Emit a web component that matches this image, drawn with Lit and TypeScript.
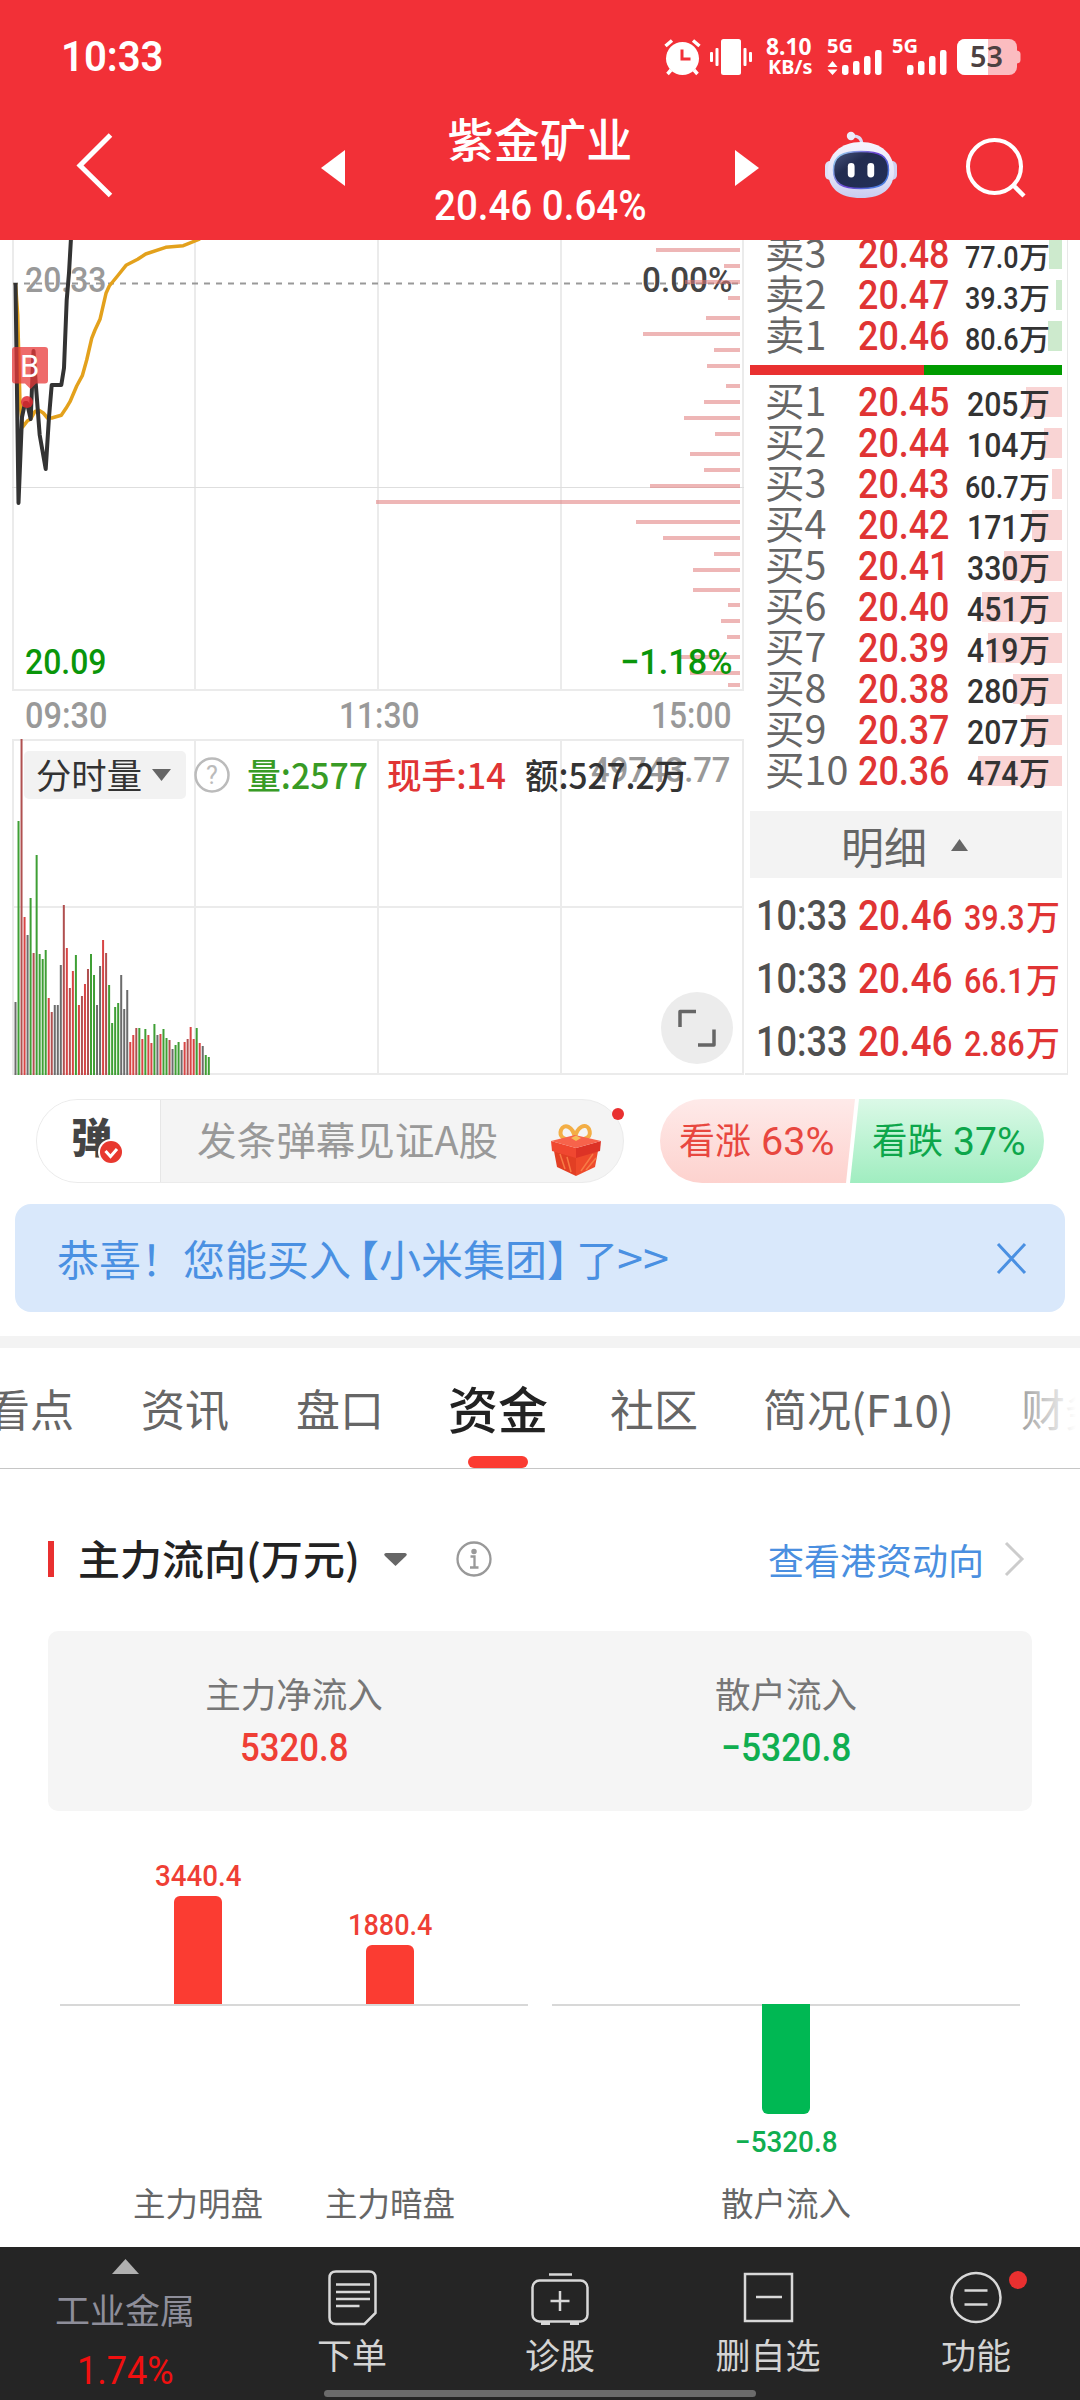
import { LitElement, html, svg, css } from "lit";
import { customElement } from "lit/decorators.js";

/* Numerals: an SVG whose box is exactly the cap-height box of the text. */
const num = (text: string, width: number, cap: number, cls = "") => html`
  <svg class="num ${cls}" width=${width} height=${cap}>
    <text x="-1" y=${cap} font-size=${cap / 0.711} textLength=${width + 2.5} lengthAdjust="spacingAndGlyphs">${text}</text>
  </svg>`;

/* Mixed Chinese / numeral text stretched to an exact width; the box is the em box. */
const mixed = (text: string, width: number, size: number, cls = "") => html`
  <svg class="mixed ${cls}" width=${width} height=${size}>
    <text x="-1" y=${size * 0.88} font-size=${size} textLength=${width + 2} lengthAdjust="spacingAndGlyphs">${text}</text>
  </svg>`;

const chartNum = (text: string, x: number, y: number, width: number, cls: string) => svg`
  <text class="cn ${cls}" x=${x - 1} y=${y} font-size="35.5" textLength=${width + 1.5} lengthAdjust="spacingAndGlyphs">${text}</text>`;

const PRICE_LEVELS: [number, number][] = [
  [656, 250], [724, 266], [685, 282], [728, 298], [706, 318], [643, 334], [714, 350], [707, 366], [726, 386],
  [704, 402], [684, 418], [715, 434], [690, 454], [704, 470], [650, 486], [376, 502], [636, 522], [663, 538],
  [714, 554], [693, 570], [693, 590], [728, 605], [721, 621], [727, 637], [680, 657], [690, 673], [728, 685],
];

/* Volume bars: colour key and height in px. */
const VOLUME =
  "k73 g254 d336 r158 k140 g177 d122 g220 g121 g116 g125 r77 d63 k70 k70 k110 d170 r127 d87 r104 g120 r70 d79 r91 d106 g121 g100 k70 k109 r135 d122 g90 g52 g68 g72 k100 k66 k85 r33 r40 d47 g47 r36 g46 r40 r32 g51 k40 r41 g46 g37 d35 k26 g30 g33 k25 r33 d36 r48 r36 g47 r32 k29 g20 g18".split(" ");
const VOL_COLORS: Record<string, string> = { k: "#6c6c6c", g: "#3f9f35", r: "#d84545", d: "#b05050" };

interface Level { label: string; price: string; vol: string; bar: number; }
const ASKS: Level[] = [
  { label: "卖3", price: "20.48", vol: "77.0", bar: 13 },
  { label: "卖2", price: "20.47", vol: "39.3", bar: 6 },
  { label: "卖1", price: "20.46", vol: "80.6", bar: 14 },
];
const BIDS: Level[] = [
  { label: "买1", price: "20.45", vol: "205", bar: 36 },
  { label: "买2", price: "20.44", vol: "104", bar: 18 },
  { label: "买3", price: "20.43", vol: "60.7", bar: 10 },
  { label: "买4", price: "20.42", vol: "171", bar: 30 },
  { label: "买5", price: "20.41", vol: "330", bar: 58 },
  { label: "买6", price: "20.40", vol: "451", bar: 80 },
  { label: "买7", price: "20.39", vol: "419", bar: 74 },
  { label: "买8", price: "20.38", vol: "280", bar: 49 },
  { label: "买9", price: "20.37", vol: "207", bar: 36 },
  { label: "买10", price: "20.36", vol: "474", bar: 84 },
];
const TRADES = ["39.3", "66.1", "2.86"];

const base = css`
  * { box-sizing: border-box; }
  svg { display: block; flex: none; overflow: visible; }
  .num text, .cn { font-family: Roboto, "Liberation Sans", sans-serif; font-weight: 500; }
  .num text, .mixed text { fill: currentColor; }
  .num.regular text { font-weight: 400; }
  .mixed text { font-family: "Noto Sans CJK SC", sans-serif; font-weight: 400; }
  .mixed.medium text { font-weight: 500; }
`;

@customElement("top-header")
class TopHeader extends LitElement {
  static styles = [base, css`
    :host { display: block; height: 240px; background: #f23037; color: #fff; }
    .status { display: flex; height: 90px; padding: 39px 60px 0 62px; align-items: flex-start; }
    .time { margin-top: 2px; }
    .num.clock text { font-weight: 600; }
    .icons { display: flex; margin-left: auto; }
    .vib { margin-left: 9px; }
    .speed { display: flex; flex-direction: column; gap: 5px; margin-left: 15px; }
    .speed .unit { margin-left: 2px; }
    .speed text, .g5 { font-family: "Noto Sans", sans-serif; font-weight: 700; }
    .pct { font-family: "Noto Sans", sans-serif; font-weight: 600; }
    .sig { margin-left: 17px; }
    .sig2 { margin-left: 11px; }
    .bat { margin-left: 10px; }
    .nav { display: flex; align-items: center; height: 150px; padding-left: 76px; }
    .prev { margin-left: 209px; margin-top: 6px; }
    .next { margin-top: 6px; }
    .title { width: 390px; display: flex; flex-direction: column; align-items: center; margin-top: 4px; gap: 30px; }
    .name { font: 500 46px/46px "Noto Sans CJK SC", sans-serif; letter-spacing: 0.3px; }
    .robot { margin-left: 66px; }
    .search { margin-left: 69px; margin-top: 3px; }
  `];
  render() {
    const bars = (x: number) => [0, 1, 2, 3].map((i) => {
      const h = [10, 14, 19, 25][i];
      return svg`<rect x=${x + i * 11} y=${36 - h} width="6.5" height=${h} rx="2.4" fill="#fff"/>`;
    });
    return html`
      <div class="status">
        <div class="time">${num("10:33", 100, 30, "clock")}</div>
        <div class="icons">
          <svg width="37" height="36" viewBox="0 0 37 36">
            <circle cx="18.500" cy="19.500" r="16.500" fill="#fff"/>
            <path d="M1.500 7L8 1.500M35.500 7L29 1.500M7 31L3.500 35M30 31L33.500 35" stroke="#fff" stroke-width="3.500" fill="none"/>
            <path d="M18 10.500V20H26.500" stroke="#f23037" stroke-width="3" fill="none"/>
          </svg>
          <svg class="vib" width="42" height="36" viewBox="0 0 42 36" fill="#fff">
            <rect x="11" width="20" height="36" rx="2.500"/><rect x="0" y="13" width="3" height="10" rx="1"/>
            <rect x="5.500" y="9" width="3" height="18" rx="1"/><rect x="33.500" y="9" width="3" height="18" rx="1"/>
            <rect x="39" y="13" width="3" height="10" rx="1"/>
          </svg>
          <div class="speed">${num("8.10", 43, 16)}<div class="unit">${num("KB/s", 42, 14)}</div></div>
          <svg class="sig" width="54" height="36">
            <text class="g5" x="-1" y="14" font-size="19" textLength="26" lengthAdjust="spacingAndGlyphs" fill="#fff">5G</text>
            <path d="M4.500 22L9.500 28H-.5ZM4.500 36L9.500 30.500H-.5Z" fill="#fff"/>${bars(14)}
          </svg>
          <svg class="sig2" width="54" height="36">
            <text class="g5" x="-1" y="14" font-size="19" textLength="26" lengthAdjust="spacingAndGlyphs" fill="#fff">5G</text>${bars(14)}
          </svg>
          <svg class="bat" width="63" height="36">
            <rect width="60" height="36" rx="8" fill="#fbbcc0"/>
            <path d="M8 0H31V36H8A8 8 0 0 1 0 28V8A8 8 0 0 1 8 0Z" fill="#fff"/>
            <path d="M60 11.500Q63.500 12 63.500 15V21Q63.500 24 60 24.500Z" fill="#fbbcc0"/>
            <text class="pct" x="13" y="28" font-size="28" textLength="33" lengthAdjust="spacingAndGlyphs" fill="#4c4142">53</text>
          </svg>
        </div>
      </div>
      <div class="nav">
        <svg width="36" height="64" viewBox="0 0 36 64"><path d="M34.500 2L4 32.500L34.500 62.500" fill="none" stroke="#fff" stroke-width="5"/></svg>
        <svg class="prev" width="24" height="36"><path d="M24 0V36L0 18Z" fill="#fff"/></svg>
        <div class="title"><div class="name">紫金矿业</div>${num("20.46 0.64%", 210, 30)}</div>
        <svg class="next" width="24" height="36"><path d="M0 0V36L24 18Z" fill="#fff"/></svg>
        <svg class="robot" width="72" height="66" viewBox="0 0 72 66">
          <defs>
            <linearGradient id="head" x1="0" y1="0" x2="0" y2="1"><stop offset="0" stop-color="#f6f5fd"/><stop offset=".6" stop-color="#e4e4f8"/><stop offset="1" stop-color="#c8ccf0"/></linearGradient>
            <linearGradient id="visor" x1="0" y1="0" x2="1" y2="1"><stop offset="0" stop-color="#4a5680"/><stop offset=".35" stop-color="#222c50"/><stop offset="1" stop-color="#223058"/></linearGradient>
            <linearGradient id="rim" x1="0" y1="0" x2="1" y2=".6"><stop offset="0" stop-color="#9be6f5"/><stop offset=".6" stop-color="#6a3fd0"/><stop offset="1" stop-color="#4a7be0"/></linearGradient>
          </defs>
          <path d="M27 4Q36 3 37 12" fill="none" stroke="#dcdcf5" stroke-width="3"/>
          <circle cx="26" cy="4" r="4.200" fill="#eeedfb"/>
          <rect x="0" y="29" width="10" height="19" rx="5" fill="#dfe0f6"/><rect x="62" y="29" width="10" height="19" rx="5" fill="#cfd1f0"/>
          <path d="M36 10C56 10 69 22 69 39C69 56 58 66 36 66C14 66 3 56 3 39C3 22 16 10 36 10Z" fill="url(#head)"/>
          <path d="M36 19.500C55 19.500 63.500 24 63.500 38C63.500 52 55 56.500 36 56.500C17 56.500 8.500 52 8.500 38C8.500 24 17 19.500 36 19.500Z" fill="url(#visor)" stroke="url(#rim)" stroke-width="1.500"/>
          <rect x="22.800" y="31" width="6.800" height="14.500" rx="3.400" fill="#fff"/><rect x="42.400" y="31" width="6.800" height="14.500" rx="3.400" fill="#fff"/>
        </svg>
        <svg class="search" width="60" height="60" viewBox="0 0 60 60" fill="none" stroke="#fff">
          <circle cx="28.500" cy="29.500" r="26.500" stroke-width="4"/><path d="M47.500 48.500L58 59" stroke-width="4.500"/>
        </svg>
      </div>`;
  }
}

@customElement("price-charts")
class PriceCharts extends LitElement {
  static styles = [base, css`
    :host { display: block; width: 745px; height: 835px; overflow: hidden; }
    .grey { fill: #999; color: #999; }
    .dark { fill: #444; }
    .green { fill: #0a960a; }
    .flag { font: 400 31px Roboto, sans-serif; fill: #fff; }
    .axis { display: flex; gap: 234px; padding: 10px 0 0 26px; height: 47px; color: #999; }
    .volume { position: relative; height: 336px; }
    .bar { position: absolute; left: 24px; top: 12px; display: flex; align-items: center; height: 48px; }
    .pill { display: flex; align-items: center; width: 162px; height: 48px; padding-left: 13px; gap: 11px; background: #f2f2f2; border-radius: 5px; color: #333; }
    .q { margin-left: 8px; }
    .v { margin-left: 18px; color: #389b25; }
    .h { margin-left: 21px; color: #e03434; }
    .m { margin-left: 21px; color: #333; }
    .full { position: absolute; left: 661px; top: 253px; }
    .qm { font: 400 25px Roboto, sans-serif; fill: #bbb; }
  `];
  render() {
    return html`
      <svg width="745" height="452" viewBox="0 240 745 452">
        <path d="M13 240V691M195 240V691M378 240V691M561 240V691M743 240V691M12 690H744" stroke="#ebebeb" stroke-width="2"/>
        <path d="M12 487.500H744" stroke="#dedede" stroke-width="1"/>
        <path d="M13 283.500H738" stroke="#999" stroke-width="2" stroke-dasharray="6 6" stroke-dashoffset="1"/>
        ${chartNum("20.33", 26, 292, 80, "grey")}
        ${chartNum("0.00%", 643, 292, 89, "dark")}
        ${PRICE_LEVELS.map(([x, y]) => svg`<rect x=${x} y=${y - 2} width=${740 - x} height="4" fill="#e07a7a" fill-opacity=".55"/>`)}
        <path d="M15.500 283L17.700 315L20 403L22.700 427L27.300 421L30.700 419L35 411.500L39.300 410.500L43.300 413L47.500 418H51.700L56 416.700L61.300 415.300L66 408.300L70 401.700L76.700 386L82.300 375.700L86.700 360L91.700 338.300L95 330L100 319.300L106 293.300L109.300 286L118.300 275L126 265.300L137.700 259.300L145.700 254L165.700 247.300L183.300 245.700L200 239" fill="none" stroke="#e3a11c" stroke-width="3.500" stroke-linejoin="round"/>
        <path d="M15.500 283L18.500 503L22 417L25 403H27L30.700 419L33.500 351L36 387L39.700 435L45.700 469L49 417L51.700 385H61.300L64 368L66.700 300L69 273L71 238" fill="none" stroke="#333" stroke-width="4" stroke-linejoin="round"/>
        <circle cx="27" cy="402" r="6" fill="#e02a30" fill-opacity=".85"/>
        <path d="M15 347H45Q48 347 48 350V380.500Q48 383.500 45 383.500H36L30.500 389L25 383.500H15Q12 383.500 12 380.500V350Q12 347 15 347Z" fill="#e83a3a" fill-opacity=".75"/>
        <text class="flag" x="20" y="376.500">B</text>
        ${chartNum("20.09", 26, 673.5, 80, "green")}
        ${chartNum("−1.18%", 621, 673.5, 111, "green")}
      </svg>
      <div class="axis">${num("09:30", 80, 26)}${num("11:30", 78, 26)}${num("15:00", 78, 26)}</div>
      <div class="volume">
        <svg width="745" height="336" viewBox="0 739 745 336">
          <path d="M12 740H744M12 907H744M12 1074H744M13 740V1075M195 740V1075M378 740V1075M561 740V1075M743 740V1075" stroke="#ebebeb" stroke-width="2"/>
          ${VOLUME.map((b, i) => {
            const h = Number(b.slice(1));
            return svg`<rect x=${14.5 + i * 3.02} y=${1075 - h} width="2" height=${h} fill=${VOL_COLORS[b[0]]}/>`;
          })}
          ${chartNum("49743.77", 592, 782, 138, "grey")}
        </svg>
        <div class="bar">
          <div class="pill">${mixed("分时量", 104, 35)}
            <svg width="19" height="12"><path d="M0 0H19L9.500 12Z" fill="#666"/></svg></div>
          <svg class="q" width="36" height="36"><circle cx="18" cy="18" r="16.500" fill="none" stroke="#bbb" stroke-width="2.500"/><text class="qm" x="18" y="27" text-anchor="middle">?</text></svg>
          ${mixed("量:2577", 119, 35, "v medium")}${mixed("现手:14", 117, 35, "h medium")}${mixed("额:527.2万", 161, 35, "m medium")}
        </div>
        <svg class="full" width="72" height="72"><circle cx="36" cy="36" r="36" fill="#ececec"/><path d="M35 19.500H19V35M37 53H53V37.500" fill="none" stroke="#666" stroke-width="3.500" stroke-linejoin="round"/></svg>
      </div>`;
  }
}

@customElement("order-book")
class OrderBook extends LitElement {
  static styles = [base, css`
    :host { display: block; box-sizing: border-box; width: 323px; height: 835px; overflow: hidden; border-right: 1px solid #e8e8e8; border-bottom: 2px solid #ebebeb; padding-left: 5px; }
    .asks { margin-top: -6px; }
    .row { position: relative; display: flex; height: 41px; width: 312px; align-items: flex-end; padding: 0 0 7px 15px; }
    .level { width: 94px; height: 34px; font: 400 39.5px/34px "Noto Sans CJK SC", sans-serif; white-space: nowrap; color: #666; }
    .fill { position: absolute; right: 0; top: 5px; height: 30px; background: #f9d4d4; }
    .ask .fill { background: #cdeacd; }
    .price { color: #e03434; z-index: 1; }
    .vol { display: flex; align-items: flex-end; justify-content: flex-end; width: 101px; color: #333; z-index: 1; gap: 3px; }
    .wan { margin-bottom: -3.500px; }
    .ratio { display: flex; width: 312px; height: 10px; margin: 8px 0 7px; background: #009b00; }
    .buy { width: 174px; background: #e93030; }
    .detail { display: flex; align-items: center; width: 312px; height: 67px; margin-top: 19px; padding-left: 91px; gap: 24px; background: #f3f3f3; font: 400 43px/42px "Noto Sans CJK SC", sans-serif; color: #666; }
    .trades { padding-top: 22px; }
    .trade { display: flex; align-items: flex-end; height: 30px; margin-bottom: 33px; padding-left: 7px; color: #e03434; }
    .at { color: #505050; margin-right: 13px; }
    .amt { display: flex; align-items: flex-end; margin-left: 14px; gap: 4px; }
  `];
  private row(l: Level, cls: string) {
    const small = l.vol.includes(".");
    return html`<div class="row ${cls}">
      <div class="fill" style="width:${l.bar}px"></div>
      <div class="level">${l.label}</div>
      <div class="price">${num(l.price, 89, 29)}</div>
      <div class="vol">${num(l.vol, small ? 51 : 49, small ? 22 : 24)}${mixed("万", 29, small ? 30 : 32, "wan medium")}</div>
    </div>`;
  }
  render() {
    return html`
      <div class="asks">${ASKS.map((l) => this.row(l, "ask"))}</div>
      <div class="ratio"><div class="buy"></div></div>
      <div>${BIDS.map((l) => this.row(l, "bid"))}</div>
      <div class="detail"><span>明细</span><svg width="17" height="12"><path d="M0 12H17L8.500 0Z" fill="#666"/></svg></div>
      <div class="trades">${TRADES.map((v) => html`<div class="trade">
        ${num("10:33", 89, 30, "at")}${num("20.46", 92, 30)}
        <div class="amt">${num(v, 58, 25)}${mixed("万", 32, 34, "wan medium")}</div></div>`)}</div>`;
  }
}

@customElement("promo-area")
class PromoArea extends LitElement {
  static styles = [base, css`
    :host { display: block; box-sizing: border-box; height: 273px; border-bottom: 12px solid #f3f3f3; }
    .line { display: flex; padding: 24px 36px 0; height: 129px; }
    .chat { position: relative; display: flex; width: 588px; height: 84px; border: 1.500px solid #ebebeb; border-radius: 42px; background: #f4f4f4; }
    .tog { position: relative; width: 124px; border-right: 1.500px solid #e6e6e6; border-radius: 41px 0 0 41px; background: #fff; padding: 14px 0 0 34px; font: 900 41px/42px "Noto Sans CJK SC", sans-serif; color: #444; }
    .tick { position: absolute; left: 61px; top: 39px; }
    .hint { padding: 21px 0 0 37px; color: #999; }
    .gift { margin: 24px 0 0 54px; }
    .dot { position: absolute; left: 575px; top: 8px; width: 12px; height: 12px; border-radius: 50%; background: #e93030; }
    .vote { display: flex; width: 384px; height: 84px; margin-left: 36px; border-radius: 42px; overflow: hidden; }
    .rise, .fall { display: flex; padding-top: 23px; height: 84px; }
    .rise { width: 195px; padding-left: 20px; gap: 12px; color: #e8473f; background: linear-gradient(#feeae9, #fdd2ce); clip-path: polygon(0 0, 100% 0, calc(100% - 9px) 100%, 0 100%); }
    .fall { width: 194px; margin-left: -5px; padding-left: 23px; gap: 12px; color: #0da64b; background: linear-gradient(#dbf9e7, #a0edc0); clip-path: polygon(9px 0, 100% 0, 100% 100%, 0 100%); }
    .pc { margin-top: 6px; }
    .banner { display: flex; align-items: center; width: 1050px; height: 108px; margin-left: 15px; padding: 0 39px 0 42px; background: #d9e8fb; border-radius: 16px; color: #4a90e2; font: 400 42px/42px "Noto Sans CJK SC", sans-serif; white-space: nowrap; }
    .banner .close { margin-left: auto; }
    .open { margin-left: -14px; }
    .shut { margin-right: -13px; }
  `];
  render() {
    return html`
      <div class="line">
        <div class="chat">
          <div class="tog">弹
            <svg class="tick" width="26" height="26"><circle cx="13" cy="13" r="13" fill="#fff"/><circle cx="13" cy="13" r="11" fill="#e8382f"/><path d="M7.500 12L12.500 17.500L19 10" fill="none" stroke="#fff" stroke-width="3"/></svg>
          </div>
          <div class="hint">${mixed("发条弹幕见证A股", 299, 39)}</div>
          <svg class="gift" width="50" height="52" viewBox="0 0 50 52">
            <path d="M24 15C12 17 8 12 10 6C13 -1 22 2 24 14C26 2 35 -1 38 5C41 12 36 17 24 15Z" fill="none" stroke="#f3ae45" stroke-width="4"/>
            <path d="M3 27L25 33V52L6 43Z" fill="#e23f24"/><path d="M47 27L25 33V52L44 43Z" fill="#ee4a2b"/>
            <path d="M0 17L25 24V34L1 27Z" fill="#f04730"/><path d="M50 17L25 24V34L49 27Z" fill="#dd3326"/>
            <path d="M0 17L24 11L50 17L25 24Z" fill="#f7634b"/>
            <path d="M9 30L14 45M16 33L20 48M42 30L30 47M45 34L35 46" stroke="#f77a45" stroke-width="1.500"/>
            <path d="M20 14L25 11.500L30 14L25 17Z" fill="#f6bd56"/>
          </svg>
          <div class="dot"></div>
        </div>
        <div class="vote">
          <div class="rise">${mixed("看涨", 70, 36)}<div class="pc">${num("63%", 71, 27, "regular")}</div></div>
          <div class="fall">${mixed("看跌", 69, 36)}<div class="pc">${num("37%", 70, 27, "regular")}</div></div>
        </div>
      </div>
      <div class="banner"><span>恭喜！您能买入</span><span class="open">【</span><span>小米集团</span><span class="shut">】</span><span>了</span>
        ${mixed("&gt;&gt;".replace(/&gt;/g, ">"), 50, 44)}
        <svg class="close" width="29" height="29"><path d="M1 0L28 29M28 0L1 29" stroke="#4a90e2" stroke-width="3"/></svg>
      </div>`;
  }
}

@customElement("section-tabs")
class SectionTabs extends LitElement {
  static styles = [base, css`
    :host { position: relative; box-sizing: border-box; display: flex; align-items: center; gap: 67px; height: 121px; border-bottom: 1px solid #c6c6c6; overflow: hidden; font: 400 44px/50px "Noto Sans CJK SC", sans-serif; color: #666; white-space: nowrap; }
    .tab { flex: none; }
    .first { margin-left: -14px; }
    .wide { margin-left: -2px; }
    .active { position: relative; align-self: stretch; margin: 0 -5px 0 -3px; font-size: 50px; font-weight: 500; line-height: 118px; color: #222; }
    .mark { position: absolute; left: 20px; bottom: 0; width: 60px; height: 12px; border-radius: 6px; background: #fb3c32; }
    .fade { position: absolute; right: 0; top: 0; width: 84px; height: 120px; background: linear-gradient(90deg, rgba(255,255,255,.1), #fff 95%); }
  `];
  render() {
    return html`
      <div class="tab first">看点</div><div class="tab">资讯</div><div class="tab">盘口</div>
      <div class="tab active">资金<div class="mark"></div></div>
      <div class="tab">社区</div><div class="tab wide">简况(F10)</div><div class="tab">财务</div>
      <div class="fade"></div>`;
  }
}

@customElement("fund-flow")
class FundFlow extends LitElement {
  static styles = [base, css`
    :host { display: block; box-sizing: border-box; height: 778px; padding: 72px 48px 0; font-family: "Noto Sans CJK SC", sans-serif; }
    .head { display: flex; align-items: center; height: 36px; }
    .tick { width: 6px; height: 36px; background: #e93030; }
    .name { margin-left: 25px; color: #222; }
    .tri { margin-left: 25px; }
    .info { margin-left: 49px; }
    .more { margin-left: auto; font-size: 36px; line-height: 36px; color: #4a8fe0; }
    .chev { margin: 0 8px 0 21px; }
    .card { display: grid; grid-template-columns: 1fr 1fr; height: 180px; margin-top: 54px; padding-top: 44px; background: #f5f5f5; border-radius: 10px; }
    .cell { display: flex; flex-direction: column; align-items: center; gap: 22px; }
    .cap { font-size: 35.500px; line-height: 36px; color: #777; }
    .red { color: #ef3f35; }
    .green { color: #10ae50; }
    .charts { display: flex; gap: 24px; margin: 54px 12px 0; }
    .group { display: flex; justify-content: center; position: relative; width: 468px; height: 358px; }
    .axis { position: absolute; left: 0; right: 0; top: 138.500px; height: 2px; background: #d8d8d8; }
    .col { display: flex; flex-direction: column; align-items: center; width: 192px; }
    .pos { height: 139px; display: flex; flex-direction: column; justify-content: flex-end; align-items: center; gap: 10px; }
    .neg { height: 182px; display: flex; flex-direction: column; align-items: center; gap: 17px; }
    .bar { width: 48px; }
    .pos .bar { background: #fb3c32; border-radius: 6px 6px 0 0; }
    .neg .bar { background: #00b853; border-radius: 0 0 6px 6px; z-index: 1; }
    .lab { font-size: 32.500px; line-height: 32px; color: #666; }
  `];
  private col(label: string, pos?: { v: string; w: number; h: number }, neg?: { v: string; w: number; h: number }) {
    return html`<div class="col">
      <div class="pos">${pos ? html`${num(pos.v, pos.w, 21, "red")}<div class="bar" style="height:${pos.h}px"></div>` : ""}</div>
      <div class="neg">${neg ? html`<div class="bar" style="height:${neg.h}px"></div>${num(neg.v, neg.w, 21, "green")}` : ""}</div>
      <div class="lab">${label}</div></div>`;
  }
  render() {
    return html`
      <div class="head">
        <div class="tick"></div>
        ${mixed("主力流向(万元)", 280, 41, "name medium")}
        <svg class="tri" width="23" height="13"><path d="M2 0H21Q24 1 22 3L11.500 13L1 3Q-1 1 2 0Z" fill="#666"/></svg>
        <svg class="info" width="36" height="36" fill="none" stroke="#999" stroke-width="2.300"><circle cx="18" cy="18" r="16.500"/><path d="M14.500 15.500H18.500V26M14 26.500H22.500"/><circle cx="18" cy="10.500" r="1.600" fill="#999"/></svg>
        <div class="more">查看港资动向</div>
        <svg class="chev" width="19" height="34"><path d="M1 1L17 17L1 33" fill="none" stroke="#ccc" stroke-width="3"/></svg>
      </div>
      <div class="card">
        <div class="cell"><div class="cap">主力净流入</div>${num("5320.8", 106, 28, "red")}</div>
        <div class="cell"><div class="cap">散户流入</div>${num("−5320.8", 128, 28, "green")}</div>
      </div>
      <div class="charts">
        <div class="group"><div class="axis"></div>
          ${this.col("主力明盘", { v: "3440.4", w: 84, h: 108 })}${this.col("主力暗盘", { v: "1880.4", w: 82, h: 59.5 })}
        </div>
        <div class="group"><div class="axis"></div>${this.col("散户流入", undefined, { v: "−5320.8", w: 100, h: 110 })}</div>
      </div>`;
  }
}

@customElement("bottom-bar")
class BottomBar extends LitElement {
  static styles = [base, css`
    :host { position: relative; display: grid; grid-template-columns: 248px repeat(4, 208px); height: 153px; background: #252525; color: #d4d4d4; font: 400 35px/36px "Noto Sans CJK SC", sans-serif; }
    .item { display: flex; flex-direction: column; align-items: center; }
    .icon { position: relative; height: 65px; margin-top: 23px; margin-bottom: 1px; }
    .ind { padding: 12px 0 0 2px; }
    .sector { margin: 17px 0 29px; color: #8e8e9a; }
    .chg { color: #f01010; }
    .dot { position: absolute; left: 59px; top: 1px; width: 18px; height: 18px; border-radius: 50%; background: #e93030; }
    .home { position: absolute; left: 324px; bottom: 3px; width: 432px; height: 7px; border-radius: 4px; background: #6b6b6b; }
  `];
  render() {
    return html`
      <div class="item ind">
        <svg width="27" height="15"><path d="M0 15H27L13.500 0Z" fill="#b0b0b0"/></svg>
        <div class="sector">工业金属</div>
        <div class="chg">${num("1.74%", 94, 28, "regular")}</div>
      </div>
      <div class="item"><svg class="icon" width="49" height="65" fill="none" stroke="#d8d8d8" stroke-width="2.500">
        <path d="M8 1.500H41Q47.500 1.500 47.500 8V43L36.500 54H8Q1.500 54 1.500 47.500V8Q1.500 1.500 8 1.500Z"/><path d="M8 14.500H42M8 22H42M8 29H42M8 36H31.500"/></svg>下单</div>
      <div class="item"><svg class="icon" width="58" height="65" fill="none" stroke="#d8d8d8" stroke-width="2.500">
        <rect x="1.500" y="10.500" width="55" height="41" rx="7"/><path d="M18 4.500H41M29 21V41M19.500 31H38.500"/><path d="M10 53H19M39 53H48" stroke-width="4"/></svg>诊股</div>
      <div class="item"><svg class="icon" width="49" height="65" fill="none" stroke="#d8d8d8" stroke-width="2.500">
        <rect x="1" y="4" width="47" height="47"/><path d="M12 27H38"/></svg>删自选</div>
      <div class="item"><div class="icon"><svg width="52" height="65" fill="none" stroke="#d8d8d8" stroke-width="2.500">
        <circle cx="26" cy="27.500" r="24.500"/><path d="M14.500 20.500H37.500M14.500 34.500H37.500"/></svg><div class="dot"></div></div>功能</div>
      <div class="home"></div>`;
  }
}

@customElement("app-root")
class AppRoot extends LitElement {
  static styles = css`
    :host { display: block; width: 1080px; height: 2400px; overflow: hidden; background: #fff; }
    .quote { display: flex; height: 835px; }
  `;
  render() {
    return html`
      <top-header></top-header>
      <div class="quote"><price-charts></price-charts><order-book></order-book></div>
      <promo-area></promo-area>
      <section-tabs></section-tabs>
      <fund-flow></fund-flow>
      <bottom-bar></bottom-bar>`;
  }
}
